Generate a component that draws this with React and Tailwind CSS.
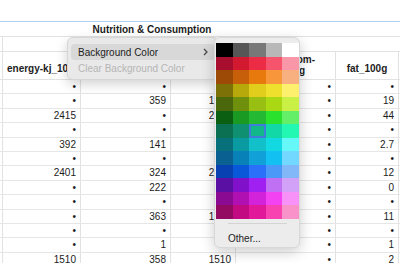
import React from 'react';

const rows = [
  ['•', '•', '•', '•', '•'],
  ['•', '359', '1502', '•', '19'],
  ['2415', '•', '2415', '•', '44'],
  ['•', '•', '•', '•', '•'],
  ['392', '141', '392', '•', '2.7'],
  ['•', '•', '•', '•', '•'],
  ['2401', '324', '2401', '•', '12'],
  ['•', '222', '222', '•', '0'],
  ['•', '•', '•', '•', '•'],
  ['•', '363', '1523', '•', '11'],
  ['•', '•', '•', '•', '•'],
  ['•', '1', '1', '•', '1'],
  ['1510', '358', '1510', '•', '2'],
];

const swatches = [
  ['#000000', '#565656', '#787878', '#b8b8b8', '#ffffff'],
  ['#a80f2e', '#d2192f', '#ec2b45', '#f6536c', '#f996a8'],
  ['#9c4a06', '#c75e09', '#e8790d', '#f7963a', '#f9b081'],
  ['#7c7106', '#b7a80b', '#e0cd1c', '#f0e02e', '#fcf06c'],
  ['#4a680b', '#6f900d', '#99bf12', '#aad812', '#cbf045'],
  ['#0a5f12', '#1a9a22', '#24b933', '#2ae22e', '#63f068'],
  ['#0b6f52', '#0f9070', '#12b88a', '#12d8a8', '#22f8b2'],
  ['#08707a', '#0a9aa2', '#11c0c8', '#12d8e2', '#66f8f8'],
  ['#0a6090', '#0880b8', '#11a0d8', '#12c0f2', '#72d8ff'],
  ['#0842b2', '#0a58da', '#2a70f8', '#4a98f8', '#82b8f8'],
  ['#5a10a2', '#8010ca', '#a020f2', '#c070f2', '#d2a2f8'],
  ['#8a0a92', '#b010b2', '#d222da', '#f242f2', '#f892f8'],
  ['#920a62', '#c20a82', '#e2189a', '#f842b2', '#f892c8'],
];

const widths = ['w-[78px]', 'w-[90px]', 'w-[65px]', 'w-[100px]', 'w-[63px]'];

function HeaderRow() {
  return (
    <div className="flex h-[28px] border-b border-[#e2e2e2]">
      <div className="w-[2px]" />
      <div className="w-[78px] border-l border-[#e2e2e2] flex items-end pb-[3px] pl-[4px] overflow-hidden whitespace-nowrap font-bold">
        energy-kj_100g
      </div>
      <div className="w-[90px] border-l border-[#e2e2e2] flex items-end justify-center pb-[3px] overflow-hidden whitespace-nowrap font-bold">
        energy-kcal_100g
      </div>
      <div className="w-[65px] border-l border-[#e2e2e2] flex items-end justify-center pb-[3px] overflow-hidden whitespace-nowrap font-bold">
        energy_100g
      </div>
      <div className="w-[100px] border-l border-[#e2e2e2] flex flex-col items-end justify-end pb-[3px] pr-[20px] leading-[11px] font-bold">
        <span>energy-from-</span>
        <span className="pr-[10px]">fat_100g</span>
      </div>
      <div className="w-[63px] border-l border-[#e2e2e2] flex items-end justify-center pb-[3px] font-bold">
        fat_100g
      </div>
      <div className="flex-1 border-l border-[#e2e2e2]" />
    </div>
  );
}

function DataRow({ values }) {
  return (
    <div className="flex h-[14.4px] border-b border-[#e6e6e6] leading-[13px]">
      <div className="w-[2px]" />
      {values.map((v, i) => (
        <div key={i} className={`${widths[i]} border-l border-[#e2e2e2] text-right pr-[4px] overflow-hidden`}>
          {v}
        </div>
      ))}
      <div className="flex-1 border-l border-[#e2e2e2]" />
    </div>
  );
}

function ContextMenu() {
  return (
    <div className="absolute left-[67px] top-[37px] w-[152px] h-[43px] rounded-[6px] bg-[#e9e9e9] border border-[#d6d6d6] shadow-[0_4px_12px_rgba(0,0,0,0.18)] pt-[6px] px-[3px]">
      <div className="h-[16px] rounded-[4px] bg-[#d8d8d8] flex items-center pl-[7px] pr-[7px] justify-between text-[#222]">
        <span>Background Color</span>
        <svg width="5" height="8" viewBox="0 0 5 8">
          <path d="M1 1 L4 4 L1 7" fill="none" stroke="#444" strokeWidth="1.2" />
        </svg>
      </div>
      <div className="h-[16px] flex items-center pl-[7px] text-[#b5b5b5]">Clear Background Color</div>
    </div>
  );
}

function Palette() {
  return (
    <div className="absolute left-[214px] top-[37px] w-[86px] h-[211px] rounded-[6px] bg-[#ececec] border border-[#d8d8d8] shadow-[0_4px_14px_rgba(0,0,0,0.2)] pt-[5px] px-[1px]">
      <div className="grid grid-cols-5 w-[83px]">
        {swatches.map((row, r) =>
          row.map((c, k) => (
            <div
              key={`${r}-${k}`}
              className={`h-[13.54px] ${r === 6 && k === 2 ? 'border-2 border-[#3f7ddb]' : ''}`}
              style={{ backgroundColor: c }}
            />
          ))
        )}
      </div>
      <div className="mt-[4px] ml-[12px] mr-[11px] h-px bg-[#d4d4d4]" />
      <div className="pl-[12px] pt-[7px] text-[#222]">Other...</div>
    </div>
  );
}

export default function App() {
  return (
    <div className="relative w-[400px] h-[263px] overflow-hidden bg-white text-[10px] text-[#1c1c1c] font-['Liberation_Sans',Arial,sans-serif]">
      <div className="h-[21px]" />
      <div className="h-[16px] border-t border-[#b3cff0] border-b border-b-[#e2e2e2] flex items-center">
        <div className="w-[304px] text-center font-bold">Nutrition &amp; Consumption</div>
      </div>
      <div className="h-[15px] border-b border-[#e2e2e2] flex">
        <div className="w-[2px]" />
        <div className="border-l border-[#e2e2e2]" />
      </div>
      <HeaderRow />
      {rows.map((r, i) => (
        <DataRow key={i} values={r} />
      ))}
      <ContextMenu />
      <Palette />
    </div>
  );
}
